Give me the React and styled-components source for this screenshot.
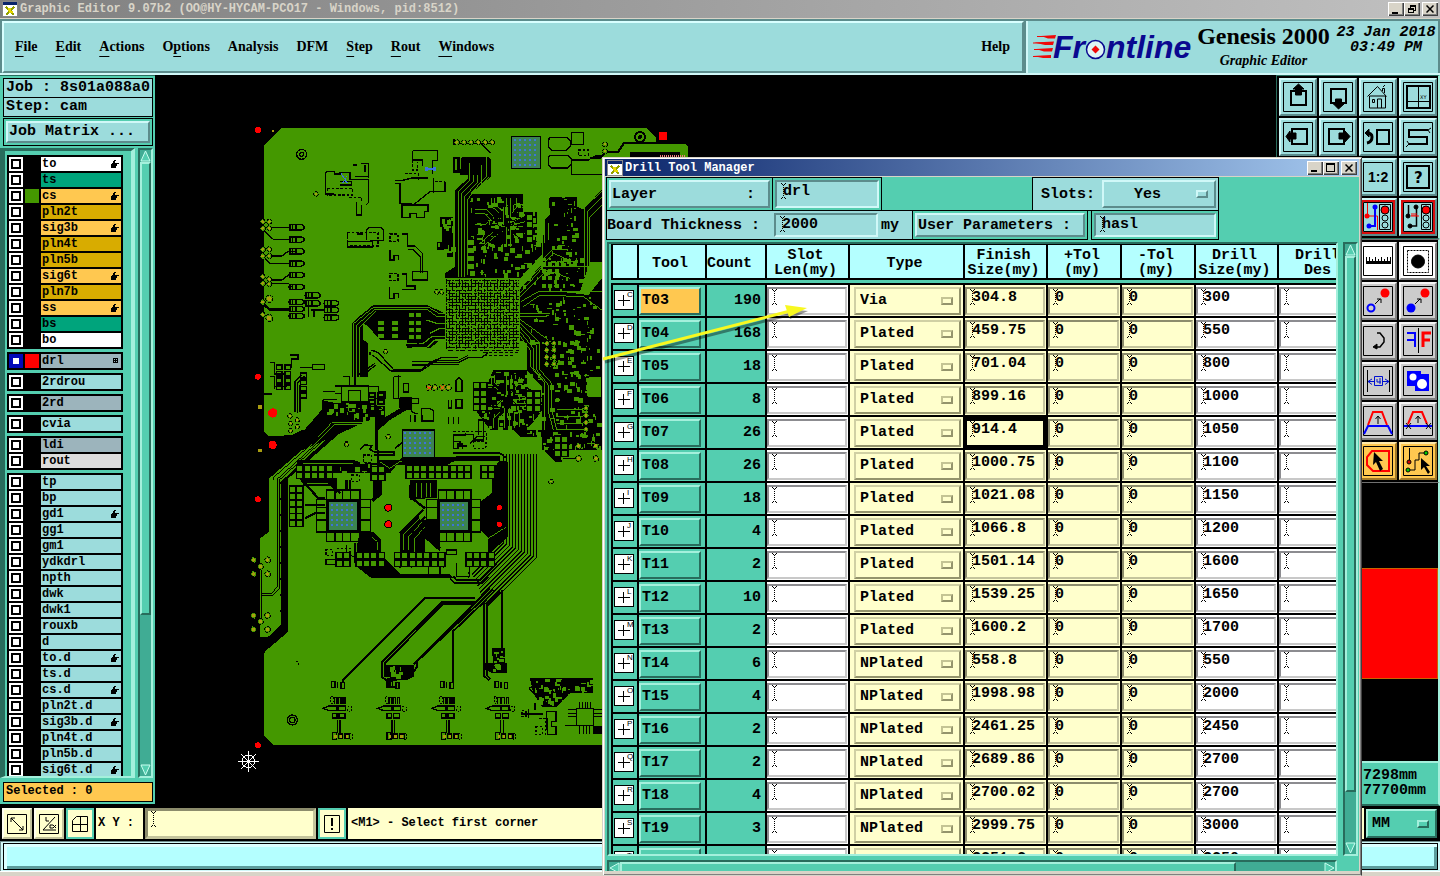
import React from 'react';
import styled, { createGlobalStyle, css } from 'styled-components';

const teal = '#54ceb0';
const tealLight = '#a4f0dc';
const tealDark = '#286c5c';
const aqua = '#9cdcdc';
const aquaLight = '#d0f8f8';
const aquaDark = '#5c8c8c';
const ice = '#b4ffff';
const cream = '#ffffcc';
const gold = '#ffc850';
const mono = '"Liberation Mono", "Courier New", monospace';
const serif = '"Liberation Serif", "Times New Roman", serif';

const bevel = (light, dark, size = 2) => css`
  border: ${size}px solid;
  border-color: ${light} ${dark} ${dark} ${light};
`;

const GlobalStyle = createGlobalStyle`
  * { box-sizing: border-box; }
  body { margin: 0; background: #000; }
  button, input, select {
    font: inherit;
    color: inherit;
    padding: 0;
    margin: 0;
    border: 0;
    border-radius: 0;
    background: none;
    outline: none;
    min-width: 0;
  }
  svg { display: block; flex: none; }
`;

const Screen = styled.div`
  position: relative;
  display: flex;
  flex-direction: column;
  height: 100vh;
  overflow: hidden;
  background: #000;
  font: bold 12px/14px ${mono};
  color: #000;
`;

/* title bars */
const TitleBar = styled.div`
  display: flex;
  align-items: center;
  flex: none;
  height: ${props => (props.$active ? 18 : 19)}px;
  padding: 0 2px;
  gap: 2px;
  color: ${props => (props.$active ? '#fff' : '#d8d4c8')};
  background: ${props => (props.$active
    ? 'linear-gradient(90deg, #0a246a, #a6caf0)'
    : 'linear-gradient(90deg, #808080, #c0c0c0)')};
  border-bottom: 1px solid #d8d4c8;
`;
const TitleText = styled.span`
  flex: 1;
  white-space: nowrap;
`;
const DialogTitle = styled.h1`
  flex: 1;
  margin: 0;
  font: bold 12px/14px ${mono};
  white-space: nowrap;
`;
const WinButtonGroup = styled.div`
  display: flex;
  margin-right: ${props => props.$joined ? 2 : 0}px;
`;
const WinButton = styled.button`
  display: flex;
  align-items: center;
  justify-content: center;
  width: 16px;
  height: 14px;
  background: #d8d4c8;
  box-shadow: inset 1px 1px #fff, inset -1px -1px #404040, inset -2px -2px #808080;
`;

/* menu bar */
const Header = styled.header`
  display: flex;
  flex: none;
  height: 56px;
  gap: 2px;
  padding-right: 2px;
  background: ${aquaDark};
  border-bottom: 2px solid ${aquaLight};
`;
const MenuBar = styled.nav`
  display: flex;
  flex: 1;
  align-items: center;
  gap: 18px;
  margin: 2px 0 0 2px;
  padding: 0 12px 0 11px;
  background: ${aqua};
  ${bevel('#d8ffff', aquaDark)}
  font: bold 14px/18px ${serif};
`;
const MenuItem = styled.button`
  white-space: nowrap;
  margin-left: ${props => (props.$last ? 'auto' : 0)};
  u { text-underline-offset: 5px; text-decoration-thickness: 1px; }
`;
const Brand = styled.div`
  display: flex;
  align-items: flex-start;
  width: 412px;
  margin-top: 2px;
  padding-left: 3px;
  gap: 2px;
  background: ${aqua};
  border-left: 2px solid ${aquaLight};
`;
const Product = styled.div`
  display: flex;
  flex-direction: column;
  align-items: center;
  width: 137px;
  padding-top: 2px;
  white-space: nowrap;
`;
const ProductName = styled.span`
  font: bold 24px/26px ${serif};
`;
const ProductPart = styled.span`
  font: italic bold 14px/24px ${serif};
`;
const Clock = styled.time`
  display: flex;
  flex: 1;
  flex-direction: column;
  align-items: center;
  padding-top: 4px;
  font: italic bold 15px/15px ${mono};
  white-space: nowrap;
`;

/* left column */
const Body = styled.div`
  display: flex;
  flex: 1;
  min-height: 0;
`;
const Sidebar = styled.aside`
  display: flex;
  flex-direction: column;
  flex: none;
  width: 155px;
  padding: 2px 2px 2px 3px;
  background: ${teal};
  border-top: 1px solid ${tealDark};
  border-bottom: 2px solid #000;
`;
const InfoLine = styled.div`
  height: 20px;
  margin-bottom: -1px;
  padding-left: 2px;
  border: 1px solid #000;
  background: ${aqua};
  font-size: 15px;
  line-height: 18px;
  white-space: pre;
`;
const MatrixFrame = styled.div`
  margin-top: 2px;
  padding: 2px;
  border: 1px solid #000;
`;
const MatrixButton = styled.button`
  width: 100%;
  height: 22px;
  padding-left: 1px;
  text-align: left;
  font-size: 15px;
  line-height: 18px;
  background: ${aqua};
  ${bevel(aquaLight, aquaDark)}
`;
const ListArea = styled.div`
  display: flex;
  flex: 1;
  min-height: 0;
  margin: 2px 0 4px -3px;
  gap: 3px;
`;
const ListFrame = styled.div`
  flex: 1;
  overflow: hidden;
  padding: 4px 8px 0 2px;
  border-style: solid;
  border-width: 3px 4px 2px 5px;
  border-color: ${tealDark} ${tealLight} ${tealLight} ${tealDark};
`;
const LayerGroup = styled.div`
  display: flex;
  flex-direction: column;
  gap: 2px;
  margin-bottom: 3px;
  padding: 2px;
  background: #000;
`;
const LayerRow = styled.label`
  display: grid;
  grid-template-columns: 14px 14px 1fr;
  gap: 2px;
  height: 14px;
`;
const LayerCheck = styled.input.attrs({ type: 'checkbox' })`
  && {
    appearance: none;
    width: 14px;
    height: 14px;
    border: 2px solid ${props => (props.$current ? '#0008b8' : '#fff')};
    background: #fff;
    box-shadow: inset 0 0 0 2px ${props => (props.$current ? '#0008b8' : '#000')};
  }
`;
const Swatch = styled.span`
  background: ${props => props.$color || '#000'};
`;
const LayerName = styled.span`
  display: flex;
  align-items: center;
  justify-content: space-between;
  padding: 0 2px 0 1px;
  line-height: 14px;
  background: ${props => props.$color};
`;
const Selected = styled.div`
  height: 20px;
  padding-left: 2px;
  line-height: 17px;
  border: 1px solid #000;
  background: ${gold};
`;

/* scroll bars */
const ScrollBar = styled.div`
  display: flex;
  flex: none;
  flex-direction: ${props => (props.$across ? 'row' : 'column')};
  ${props => (props.$across ? 'height: 15px;' : 'width: 15px;')}
  background: #40ac94;
  ${bevel(tealDark, tealLight)}
`;
const Thumb = styled.div`
  flex: ${props => props.$size};
  background: ${teal};
  ${bevel(tealLight, tealDark)}
`;
const Trough = styled.div`
  flex: ${props => props.$size};
`;

/* drawing */
const Canvas = styled.main`
  flex: 1;
  min-width: 0;
  overflow: hidden;
  background: #000;
`;

/* right tool panel */
const ToolPanel = styled.aside`
  display: flex;
  flex-direction: column;
  flex: none;
  width: 164px;
  background: #000;
`;
const ToolGrid = styled.div`
  display: grid;
  grid-template-columns: repeat(4, 38px);
  gap: 2px;
  padding: 2px 0 2px 2px;
  background: #000;
  border: 1px solid ${props => (props.$gray ? '#707070' : tealDark)};
  border-right: 2px solid ${tealLight};
`;
const ToolButton = styled.button`
  display: flex;
  align-items: center;
  justify-content: center;
  width: 38px;
  height: 38px;
  background: ${props => props.$face || aqua};
  ${props => (props.$dark
    ? bevel(props.$light, props.$dark)
    : bevel(aquaLight, aquaDark))}
  outline: ${props => (props.$ring ? '2px solid #d80c0c' : 'none')};
  outline-offset: -4px;
`;
const Overview = styled.div`
  display: flex;
  flex-direction: column;
  justify-content: center;
  flex: 1;
  border-right: 2px solid ${tealLight};
`;
const OverviewBoard = styled.div`
  height: 111px;
  margin-top: 2px;
  background: #f00;
  border: 1px solid #c86400;
`;
const Position = styled.output`
  display: flex;
  flex-direction: column;
  height: 45px;
  padding: 5px 0 0 85px;
  font-size: 15px;
  line-height: 15px;
  background: ${teal};
  ${bevel(tealLight, tealDark)}
  border-right-color: ${tealLight};
`;

/* command line */
const CommandRow = styled.div`
  display: flex;
  flex: none;
  height: 35px;
  padding: 2px 1px 2px 2px;
  gap: 2px;
  background: #000;
`;
const CommandButton = styled.button`
  display: flex;
  align-items: center;
  justify-content: center;
  width: ${props => (props.$on ? 28 : 30)}px;
  background: ${cream};
  ${bevel('#fffff0', '#c4c49c')}
  outline: ${props => (props.$on ? `2px solid ${teal}` : 'none')};
  outline-offset: -2px;
`;
const CoordLabel = styled.label`
  width: 47px;
  line-height: 31px;
  padding-left: 2px;
  background: ${cream};
  white-space: nowrap;
`;
const CoordField = styled.div`
  display: flex;
  width: 171px;
  padding: 0 3px;
  background: ${cream};
  ${bevel('#8c8c6c', '#c4c49c', 3)}
`;
const Message = styled.div`
  flex: 1;
  padding-left: 3px;
  line-height: 31px;
  background: ${cream};
`;
const UnitSelect = styled.div`
  display: flex;
  align-items: center;
  justify-content: space-between;
  width: 71px;
  margin: 1px 2px 1px 0;
  padding: 0 6px 0 4px;
  font-size: 15px;
  background: ${teal};
  ${bevel(tealLight, tealDark)}
`;
const StatusFrame = styled.footer`
  display: flex;
  flex: none;
  height: 30px;
  padding: 1px 2px;
  background: ${aquaLight};
  border-top: 1px solid #708c8c;
  border-left: 1px solid #708c8c;
`;
const StatusLine = styled.div`
  flex: 1;
  border: 1px solid #000;
  box-shadow: inset 3px 3px #dcffff, inset -3px -3px #5c9c9c;
  background: ${ice};
`;
const DeskEdge = styled.div`
  flex: none;
  height: 5px;
  background: #d8d4c8;
  border-top: 1px solid #fff;
`;

/* drill tool window */
const Dialog = styled.section`
  position: absolute;
  top: 157px;
  left: 602px;
  right: 78px;
  bottom: 0;
  display: flex;
  flex-direction: column;
  padding: 1px 2px 4px;
  background: #d8d4c8;
  border: 1px solid #d8d4c8;
  border-right-color: #404040;
  box-shadow: inset 1px 1px #fff, inset -1px -1px #808080;
  font-size: 15px;
  line-height: 15px;
`;
const DialogBody = styled.div`
  display: flex;
  flex-direction: column;
  flex: 1;
  min-height: 0;
  padding-left: 1px;
  background: ${teal};
`;
const FormRow = styled.div`
  display: flex;
  flex: none;
  height: ${props => props.$height}px;
  margin-bottom: -1px;
`;
const FormBox = styled.div`
  display: flex;
  align-items: center;
  flex: none;
  width: ${props => props.$width}px;
  margin-right: ${props => props.$after || -1}px;
  padding: ${props => (props.$flush ? '2px 2px 2px 0' : '2px')};
  border: 1px solid #000;
  background: ${props => (props.$plain ? aqua : teal)};
`;
const FormButton = styled.button`
  flex: 1;
  display: flex;
  align-items: center;
  justify-content: space-between;
  height: 100%;
  padding: 0 ${props => props.$inset || 13}px 0 1px;
  text-align: left;
  white-space: pre;
  background: ${aqua};
  ${bevel(aquaLight, aquaDark)}
`;
const FormLabel = styled.label`
  flex: none;
  width: ${props => props.$width}px;
  padding-left: ${props => props.$indent || 0}px;
  white-space: pre;
`;
const FormField = styled.div`
  display: flex;
  flex: ${props => (props.$width ? 'none' : 1)};
  width: ${props => (props.$width ? `${props.$width}px` : 'auto')};
  height: 100%;
  padding: 1px 0 0 4px;
  background: ${aqua};
  ${bevel(aquaDark, aquaLight)}
`;
const TextInput = styled.input`
  flex: 1;
  width: 0;
  height: 17px;
  line-height: 17px;
  margin-left: -3px;
`;
const Picker = styled.select`
  appearance: none;
  flex: 1;
  width: 0;
  height: 100%;
  padding-right: ${props => (props.$center ? 6 : 0)}px;
  text-align: ${props => (props.$center ? 'center' : 'left')};
`;
const Knob = styled.span`
  flex: none;
  width: 12px;
  height: 8px;
  ${props => bevel(props.$light || aquaLight, props.$dark || aquaDark)}
`;
const TableArea = styled.div`
  display: flex;
  flex: 1;
  min-height: 0;
  margin: 3px 1px 4px 1px;
  gap: 5px;
`;
const TableFrame = styled.div`
  flex: 1;
  overflow: hidden;
  padding-left: 2px;
  border-style: solid;
  border-width: 2px;
  border-color: ${tealDark} ${tealLight} ${tealLight} ${tealDark};
`;
const DrillTable = styled.table`
  table-layout: fixed;
  width: 749px;
  border-collapse: separate;
  border-spacing: 0;
  tbody::before {
    content: '';
    display: block;
    height: 3px;
  }
`;
const HeadCell = styled.th`
  height: 36px;
  padding: 3px 4px 0 0;
  border-left: 2px solid #000;
  border-top: 1px solid #000;
  border-bottom: 2px solid #000;
  background: ${ice};
  font-weight: bold;
  text-align: ${props => (props.$snug ? 'left' : 'center')};
  white-space: pre-line;
`;
const Cell = styled.td`
  height: 33px;
  padding: ${props => props.$pad || '1px 2px'};
  border-left: 2px solid #000;
  border-top: 2px solid #000;
  background: ${props => (props.$focus ? '#000' : props.$face || teal)};
  text-align: right;
`;
const PlusButton = styled.button`
  display: block;
  width: 20px;
  height: 20px;
  border: 1px solid #000;
  background: #fff;
`;
const ToolName = styled.button`
  display: block;
  width: 62px;
  height: 28px;
  padding-left: 1px;
  text-align: left;
  background: ${props => (props.$on ? gold : teal)};
  ${bevel(tealLight, tealDark)}
`;
const CellField = styled.div`
  display: flex;
  height: 28px;
  padding-left: 3px;
  background: ${props => (props.$cream ? cream : '#fff')};
  ${props => (props.$cream ? bevel('#8c8c6c', '#c4c49c') : bevel('#8c8c90', '#c8c8c8'))}
  ${props => props.$focus && 'border-color: #000;'}
`;
const TypeField = styled.div`
  display: flex;
  align-items: center;
  height: 28px;
  padding: 0 6px 0 4px;
  background: ${cream};
  ${bevel('#d0d0a4', '#94946c')}
`;
const ScrollRow = styled.div`
  display: flex;
  flex: none;
  height: 11px;
  margin: 0 22px 0 1px;
  overflow: hidden;
`;
const WideScroll = styled(ScrollBar)`
  flex: 1;
`;
const Pointer = styled.svg`
  position: absolute;
  top: 296px;
  left: 596px;
  pointer-events: none;
`;

const menus = [
  ['', 'F', 'ile'], ['', 'E', 'dit'], ['', 'A', 'ctions'], ['O', 'p', 'tions'],
  ['Analysis', '', ''], ['DFM', '', ''], ['', 'S', 'tep'], ['', 'R', 'out'], ['', 'W', 'indows'],
];

const dk = '#d8ac00';
const gn = '#00a47c';
const gr = '#9cb4bc';
const layerGroups = [
  [['to', '#fff', 1], ['ts', gn], ['cs', gold, 1], ['pln2t', dk], ['sig3b', gold, 1], ['pln4t', dk],
    ['pln5b', dk], ['sig6t', gold, 1], ['pln7b', dk], ['ss', gold, 1], ['bs', gn], ['bo', '#fff']],
  [['drl', gr, 2]],
  [['2rdrou', aqua]],
  [['2rd', gr]],
  [['cvia', aqua]],
  [['ldi', gr], ['rout', '#dcdcdc']],
  [['tp', aqua], ['bp', aqua], ['gd1', aqua, 1], ['gg1', aqua], ['gm1', aqua], ['ydkdrl', aqua],
    ['npth', aqua], ['dwk', aqua], ['dwk1', aqua], ['rouxb', aqua], ['d', aqua], ['to.d', aqua, 1],
    ['ts.d', aqua], ['cs.d', aqua, 1], ['pln2t.d', aqua], ['sig3b.d', aqua, 1], ['pln4t.d', aqua],
    ['pln5b.d', aqua], ['sig6t.d', aqua, 1]],
];

const columns = [
  ['', 26], ['Tool', 68], ['Count', 60], ['Slot\nLen(my)', 83], ['Type', 115], ['Finish\nSize(my)', 83],
  ['+Tol\n(my)', 74], ['-Tol\n(my)', 74], ['Drill\nSize(my)', 83], ['Drill\nDes', 83],
];

const tools = [
  ['T03', 190, 'Via', '304.8', '300'],
  ['T04', 168, 'Plated', '459.75', '550'],
  ['T05', 18, 'Plated', '701.04', '800'],
  ['T06', 8, 'Plated', '899.16', '1000'],
  ['T07', 26, 'Plated', '914.4', '1050'],
  ['T08', 26, 'Plated', '1000.75', '1100'],
  ['T09', 18, 'Plated', '1021.08', '1150'],
  ['T10', 4, 'Plated', '1066.8', '1200'],
  ['T11', 2, 'Plated', '1501.14', '1600'],
  ['T12', 10, 'Plated', '1539.25', '1650'],
  ['T13', 2, 'Plated', '1600.2', '1700'],
  ['T14', 6, 'NPlated', '558.8', '550'],
  ['T15', 4, 'NPlated', '1998.98', '2000'],
  ['T16', 2, 'NPlated', '2461.25', '2450'],
  ['T17', 2, 'NPlated', '2689.86', '2700'],
  ['T18', 4, 'NPlated', '2700.02', '2700'],
  ['T19', 3, 'NPlated', '2999.75', '3000'],
  ['T20', 2, 'NPlated', '3251.2', '3250'],
];

const AppIcon = () => (
  <svg width="16" height="16" viewBox="0 0 16 16" shapeRendering="crispEdges">
    <path fill="#fff" stroke="#888" d="M.5.5h15v15H.5z" />
    <path fill="#0a246a" d="M1 1h14v3H1z" />
    <path stroke="#94a000" strokeWidth="2" fill="none" d="M4 6l8 8M12 6l-8 8" />
    <path fill="#e8d800" d="M6 7h3v3H6zM7 10h4v2H7z" />
  </svg>
);

const WinButtons = ({ restore }) => (
  <>
    <WinButtonGroup>
      <WinButton aria-label="Minimize">
        <svg width="10" height="9"><path d="M1 7h6v2H1z" /></svg>
      </WinButton>
      <WinButton aria-label="Maximize">
        <svg width="10" height="9" shapeRendering="crispEdges">
          {restore
            ? <path fill="none" stroke="#000" d="M3.5 2.5V.5h5v5h-2M1.5 3.5h5v4h-5zM3 1h6M1 4h6" />
            : <path fill="none" stroke="#000" d="M.5.5h8v8h-8zM0 1.5h9" />}
        </svg>
      </WinButton>
    </WinButtonGroup>
    <WinButton aria-label="Close">
      <svg width="8" height="8"><path stroke="#000" strokeWidth="1.5" d="M.5.5l7 7M7.5.5l-7 7" /></svg>
    </WinButton>
  </>
);

const IBeam = () => (
  <svg width="5" height="16" viewBox="0 0 5 16" shapeRendering="crispEdges">
    <path stroke="#000" strokeDasharray="1 1" d="M2.5 2v12" />
    <path fill="#000" d="M0 0h1v1H0zM4 0h1v1H4zM1 1h1v1H1zM3 1h1v1H3zM0 15h1v1H0zM4 15h1v1H4zM1 14h1v1H1zM3 14h1v1H3z" />
  </svg>
);

const ScrollArrow = ({ d }) => (
  <svg width="11" height="12" viewBox="0 0 11 12">
    <path fill="#54ceb0" stroke="#c8fff0" d={d} />
  </svg>
);

const LayerMark = ({ kind }) => (kind === 1 ? (
  <svg width="8" height="8" viewBox="0 0 8 8" shapeRendering="crispEdges">
    <path d="M3 0h2v1h-1v2h4v1H6v1H6v1H5v2H0V4h1V3h1V1h1z" />
  </svg>
) : (
  <svg width="6" height="6" viewBox="0 0 6 6" shapeRendering="crispEdges">
    <path fill="none" stroke="#000" d="M.5.5h4v4h-4zM2.5 0v5M0 2.5h5" />
  </svg>
));

const Logo = () => (
  <svg width="162" height="52" viewBox="1031 21 162 52">
    <g fill="#f00808">
      <path d="M1041 36l15-1-1 3.5h-7zM1034 42.500l20-1-1 3.500h-8zM1036 49l17-1-1 3.500h-8zM1033 56l18-1v3h-8z" />
      <path stroke="#f00808" d="M1037 36.500h10M1033 43h10M1034 49.500h10M1033 56.500h10" />
    </g>
    <g fill="#0a0890" fontFamily='"Liberation Sans", Arial, sans-serif' fontWeight="bold" fontStyle="italic" fontSize="32">
      <text x="1053" y="58">Fr</text>
      <text x="1106" y="58">ntline</text>
    </g>
    <circle cx="1095.500" cy="49.500" r="9" fill="#dcf4f4" stroke="#0a0890" strokeWidth="1.5" />
    <path fill="#f00808" d="M1095.500 45.500l4 4-4 4-4-4z" />
  </svg>
);

const glyph = { fill: '#000', stroke: 'none', fontFamily: '"DejaVu Sans", sans-serif', fontWeight: 'bold' };

const iconShapes = {
  up: <><path strokeWidth="2" d="M8 9v14h15V9z" /><path fill="#000" d="M12.5 13V7H10l5.5-5L21 7h-2.500v6z" /></>,
  down: <><path strokeWidth="2" d="M8 7h15v14H8z" /><path fill="#000" d="M12.5 17h6v5H21l-5.500 5-5-5h2z" /></>,
  home: <path d="M4.5 14.5l10-10 9 10M6.500 14v12h16V14zM14.500 26v-9h4v9M9.500 17.500h2v3h-2zM19.500 9V6.500h2V11M20 5l2-2" />,
  panes: <><path strokeWidth="2" d="M4 4h23v22H4z" /><path d="M15.500 4v22M4 19.500h23" /><text x="17" y="17" {...glyph} fontWeight="normal" fontSize="5">XY</text></>,
  left: <><path strokeWidth="2" d="M9 7h15v15H9z" /><path fill="#000" d="M13 11H7V9l-4 5.500L7 20v-3h6z" /></>,
  right: <><path strokeWidth="2" d="M6 7h15v15H6z" /><path fill="#000" d="M16 11h6V9l5 5.500-5 5.500v-3h-6z" /></>,
  undo: <><path strokeWidth="2" d="M14 8h12v14H14z" /><path strokeWidth="3" d="M4 21q5-1 5-6q0-4-5-4" /><path fill="#000" d="M2 11l4-4v8z" /></>,
  snake: <><path strokeWidth="2" d="M25 8H6v7h18v7H6" /><path d="M25 8l3-2M25 8l2 3M6 22l-2-3M6 22l-3 3" /></>,
  ratio: <text x="5" y="20" {...glyph} fontFamily='"Liberation Sans", sans-serif' fontSize="14">1:2</text>,
  help: <><path strokeWidth="2" d="M4 4h22v22H4z" /><text x="11" y="21" {...glyph} fontSize="15">?</text></>,
  drcRed: (
    <>
      <path stroke="#f00" d="M4.500 1v13h10v14" /><path stroke="#00f" strokeWidth="2" d="M12 5v19H6" />
      <circle cx="4" cy="14" r="2.500" fill="#f00" stroke="none" />
      <circle cx="12" cy="5" r="2.500" fill="#00f" stroke="none" /><circle cx="6" cy="24" r="2.500" fill="#00f" stroke="none" />
      <path d="M16.500 2.500h11v25h-11z" /><circle cx="22" cy="8" r="4" fill="#f00" />
      <circle cx="22" cy="16" r="3" /><circle cx="22" cy="23" r="3" />
    </>
  ),
  drcBlack: (
    <>
      <path d="M5.500 3v11M13.500 5v19h-6" strokeWidth="1.500" /><path stroke="#f00" d="M8 14h8M9 11v3M11 11v3M13 11v3" />
      <g fill="#000"><circle cx="5" cy="14" r="2" /><circle cx="13" cy="5" r="2" /><circle cx="7" cy="24" r="2" /></g>
      <path d="M18.500 2.500h9v25h-9z" /><circle cx="23" cy="8" r="4" fill="#f00" />
      <circle cx="23" cy="16" r="3" /><circle cx="23" cy="23" r="3" />
    </>
  ),
  ruler: <path fill="#000" stroke="none" d="M3 18v-7h1v4h2v-4h1v4h2v-2h1v2h2v-4h1v4h2v-2h1v2h2v-4h1v4h2v-2h1v2h2v-4h1v4h2v-4h1v7z" />,
  pad: <><path strokeDasharray="2 1" d="M4.500 4.500h21v22h-21z" /><circle cx="15" cy="15.500" r="6.500" fill="#000" /></>,
  moveOpen: (
    <>
      <circle cx="8" cy="22" r="3.500" stroke="#00f" strokeWidth="2" /><circle cx="22" cy="7" r="4.500" fill="#f00" stroke="none" />
      <path d="M12 18l5-5M14 13h4v4" />
    </>
  ),
  moveFull: (
    <>
      <circle cx="8" cy="22" r="4.500" fill="#00f" stroke="none" /><circle cx="22" cy="7" r="4.500" fill="#f00" stroke="none" />
      <path d="M12 18l5-5M14 13h4v4" />
    </>
  ),
  rotate: <><path strokeWidth="1.500" d="M14 7h3l4 5v4l-4 5h-5" /><path fill="#000" d="M10 21l4-3v5z" /></>,
  mirror: <><path d="M15.500 2v25" /><path stroke="#00f" strokeWidth="2" d="M4 7h8v14M4 14h8" /><path stroke="#f00" strokeWidth="3" d="M28 7h-8v14M27 14h-7" /></>,
  stretch: <><path d="M4.500 4v22M26.500 4v22" /><g stroke="#0010d0"><path d="M11.500 10.500h8v9h-8zM14 13v3h4M17 12v6M5 15.500h6M20 15.500h6M9 13l-4 2.500 4 3M22 13l4 2.500-4 3" /></g></>,
  blocks: <><path fill="#00f" stroke="none" d="M4 5h14v3h8v17H12v-5H4z" /><circle cx="10" cy="11" r="3.500" fill="#fff" stroke="none" /><circle cx="19" cy="18" r="5" fill="#fff" stroke="none" /></>,
  raise: <><path stroke="#00f" strokeWidth="2" d="M1 28l4-8h20l4 8" /><path stroke="#f00" strokeWidth="2" d="M5 19l5-13h9l5 13" /><path d="M15 18v-7M12.500 13l2.500-3 2.500 3" /></>,
  raiseCut: <><path stroke="#00f" strokeWidth="2" d="M1 20h28" /><path stroke="#f00" strokeWidth="2" d="M5 18l5-12h9l5 12" /><path d="M15 17v-6M12.500 13l2.500-3 2.500 3M3 17l5 6M8 17l-5 6M23 17l5 6M28 17l-5 6" /></>,
  pick: <><path stroke="#f00" strokeWidth="2" d="M9 5h17v20H10l-6-6v-8z" /><path fill="#000" stroke="none" d="M11 6l9 9h-4l4 8-3 2-4-9-3 3z" /></>,
  pickNet: (
    <>
      <path d="M6.500 2v12M24 7h-8v7h-4v10H6" />
      <circle cx="6" cy="16" r="2" fill="#d00000" /><circle cx="23" cy="7" r="2" fill="#0c0" /><circle cx="5" cy="24" r="2" fill="#0c0" />
      <path fill="#000" stroke="none" d="M18 12l9 8h-4l4 6-2 2-4-7-3 3z" />
    </>
  ),
};

const ToolIcon = ({ name }) => (
  <svg width="30" height="30" viewBox="0 0 30 30" fill="none" stroke="#000">
    <path d="M.5.5h29v29H.5z" />
    {iconShapes[name]}
  </svg>
);

const viewTools = [
  'up', 'down', 'home', 'panes', 'left', 'right', 'undo', 'snake',
  '', '', 'ratio', 'help', '', '', 'drcRed', 'drcBlack',
];
const editTools = [
  '', '', 'ruler', 'pad', '', '', 'moveOpen', 'moveFull', '', '', 'rotate', 'mirror',
  '', '', 'stretch', 'blocks', '', '', 'raise', 'raiseCut', '', '', 'pick', 'pickNet',
];
const editFace = index => (index < 4 ? '#fff' : index > 19 ? gold : '#ccc');

/* board artwork */
const copper = '#449800';

// small rectangles on a coarse grid, same result on every render
const scatter = (x, y, w, h, count, seed) => {
  let state = seed * 7919;
  const next = max => {
    state = (state * 1103515245 + 12345) % 2147483648;
    return Math.floor((state / 2147483648) * max);
  };
  let d = '';
  for (let i = 0; i < count; i += 1) {
    const bw = 3 + next(5) * 3;
    const bh = 3 + next(5) * 3;
    d += `M${x + next(w / 3) * 3} ${y + next(h / 3) * 3}h${bw}v${bh}h${-bw}z`;
  }
  return d;
};

const padGrid = (x, y, nx, ny, px, py, w, h) => {
  let d = '';
  for (let i = 0; i < nx; i += 1) {
    for (let j = 0; j < ny; j += 1) d += `M${x + i * px} ${y + j * py}h${w}v${h}h${-w}z`;
  }
  return d;
};

const PadBank = ({ x, y, n, rows = 2 }) => (
  <>
    <path fill="#000" d={`M${x - 4} ${y - 4}h${n * 22 + 2}v${rows * 22}h${-(n * 22 + 2)}z`} />
    <path fill={copper} d={padGrid(x, y, n, rows, 22, 22, 15, 15)} />
  </>
);

const Thermal = ({ x, y, w, h }) => (
  <>
    <rect x={x} y={y} width={w} height={h} fill="#3c8450" stroke="#000" strokeWidth="3" />
    <path fill="#3c74d8" d={padGrid(x + 6, y + 6, Math.floor(w / 15), Math.floor(h / 15), 15, 15, 6, 6)} />
  </>
);

const Part = ({ x, y }) => (
  <path
    transform={`translate(${x} ${y})`}
    fill="none"
    stroke="#000"
    strokeWidth="4"
    d="M0 -8h18v16H0zM20 -8h14l8 4v8l-8 4H20zM-6 0h6M8 -8v16"
  />
);

const Vias = ({ points, r = 5 }) => points.map(([x, y]) => (
  <g key={`${x}-${y}`}>
    <circle cx={x} cy={y} r={r + 4} fill={copper} stroke="#000" strokeWidth="3" strokeDasharray="9 4" />
    <circle cx={x} cy={y} r={r} fill="#a89c10" />
  </g>
));

const Dots = ({ points }) => points.map(([x, y, r]) => <circle key={`${x}-${y}`} cx={x} cy={y} r={r} fill="#f00" />);

const Connector = ({ x }) => (
  <g transform={`translate(${x} 0)`}>
    <path
      fill="none"
      stroke="#000"
      strokeWidth="4"
      d="M-20 755h10v18h-10zM-2 755v18M8 775v-18h10v18zM-12 822v-20h8v20M0 822v-20h8v20M14 822v-20h6v20M-28 828h24v14h-24l-18-7zM0 828h22v14H0zM-18 850h14v14h-14zM2 850h18v14H2zM-3 870v38M5 870v38M-18 908h12v20h-12zM0 912h12v14H0zM20 912h14v14H20z"
    />
    <path fill="none" stroke="#000" strokeWidth="3" strokeDasharray="5 5" d="M-22 800h8v20h-8zM28 830h12v14H28zM34 910h8v18h-8z" />
    <path fill="#a89c10" d="M-12 916h7v8h-7zM4 916h7v8H4zM22 916h7v8h-7z" />
  </g>
);

const busLines = () => {
  let d = '';
  for (let i = 0; i < 12; i += 1) {
    const x = 890 - i * 9;
    const y = 382 - i * 4;
    d += `M${x} 72V${y}L${740 - i * 4} ${y + x - 740 + i * 4}`;
  }
  return d;
};

const UpperBoard = () => (
  <g transform="translate(240 110) scale(.33333)">
    <g fill="#000">
      <path d="M665 140H745L753 150V200L690 252H850V305H892V400H905V435L840 505H615V490L645 470V240L685 205V195H660z" />
      <path d="M838 540L908 460V400L915 330L930 315V260H1010V290L1030 298L1085 240V1020H905V830L860 780V700L838 690z" />
      <path d="M345 630L400 585H560L620 612V690H600L570 715H500V690H420L385 650L370 640V690L385 700V800H336V640z" />
      <path d="M85 978L180 975L245 900V870L290 880H400L435 900V925H400L190 1020H72V965z" />
      <path d="M700 815H745L760 780H860V830L905 860V905L860 960H750L710 905V880H700z" />
      <path d="M600 320H640V440H620V420H592V395H605V350H600z" />
      <path d="M405 925H430L480 895V860H515V900H500L450 930L415 960V1020H405z" />
    </g>
    <g fill="none" stroke={copper} strokeWidth="3">
      <path d="M655 500V245L690 210V160M664 500V252L700 215V160M673 500V260L712 218V165M682 495V268L725 222V165M740 140V200L693 248M747 200L700 250" />
      <path d="M342 800V640L400 592H565L600 612H620M351 800V645L404 598H560L592 620H620M360 800V650L408 604" />
      <path d="M840 550L910 470L1040 470M840 562L920 480L990 505M842 575L895 545L1085 545M850 590L900 555L1030 560L1085 600M840 612H930M840 620H920M840 628L925 690M842 640L900 700V780L935 820V900L950 960M840 652L890 708V780L925 825V905L940 960M840 665L880 715V775L915 820V1000M840 678L872 722V770L908 812" />
      <path d="M1035 500V290L1085 245M1042 495V305L1085 262M1050 490V320L1085 285M915 400V335M925 390V340M860 500L935 420H985M870 505L940 430L1010 460M950 900H1035M950 920H1035M950 940H1035M950 960H1035" />
      <path d="M620 655H600L570 670M620 640H590L560 630M500 700H550L575 680H620M515 712H560L585 690H620M515 725H565L595 700H620" strokeWidth="4" />
      <path d="M200 1020L275 938H400M208 1020L282 945H370" />
    </g>
    <g fill={copper}>
      <path d={scatter(690, 258, 200, 160, 120, 3)} />
      <path d={scatter(690, 400, 200, 95, 38, 5)} />
      <path d={scatter(850, 440, 180, 100, 45, 7)} />
      <path d={scatter(930, 260, 80, 200, 45, 8)} />
      <path d={scatter(870, 560, 200, 140, 60, 11)} />
      <path d={scatter(930, 690, 145, 160, 70, 13)} />
      <path d={scatter(930, 860, 150, 155, 60, 17)} />
      <path d={scatter(705, 785, 200, 170, 120, 19)} />
      <path d={scatter(595, 325, 45, 115, 24, 21)} />
      <path d={scatter(255, 880, 170, 45, 36, 23)} />
      <path d="M960 545h60l30 -90h35v50l-40 50z" />
      <path d="M1048 800h35v60h-40l-5 -30z" />
      <path d={padGrid(415, 632, 2, 3, 40, 20, 18, 12)} />
      <path d={padGrid(508, 610, 2, 4, 20, 22, 14, 12)} />
      <path d={padGrid(685, 390, 1, 4, 20, 24, 18, 14)} />
      <path d={padGrid(905, 455, 3, 4, 20, 22, 12, 12)} />
    </g>
    <g fill="none" stroke={copper} strokeWidth="3">
      <path d="M755 265v25l25 20v30M765 265v20l25 20v40M800 265v60M812 265v60M830 265v25l-15 20M705 300h35l20 20M705 312h30l20 20M705 345h30l10-10M850 320l-30 15M855 335l-35 10M850 350h-30M720 400l40-35M730 410l45-40M800 350v60M812 350v60M830 400l-10-30" />
      <path d="M755 800v25l20 15M765 795v25l20 15M800 795v50M815 795v40M840 800l-15 40M725 885h50l15-15M725 895h55M830 870h50M830 880h45M830 890h40M760 955v-30l20-20M775 955v-30l15-15M795 955v-60M810 955v-60M825 955v-50M840 950v-40" />
    </g>
    <g fill="none" stroke="#000" strokeWidth="3">
      <path d="M745 320h20v-20M750 345h25l15 15M760 380l35 -25M810 290v50l25 10M815 340l40 -20M820 370l35 25M790 360v50M780 300v35M795 285v50M745 395h40" />
      <path d="M745 830h35l15 20M750 850l40 10M810 800v50l25 -15M800 870v60M815 870l35 30M785 870l-30 30M730 885h40" />
    </g>

    <rect x="615" y="505" width="225" height="215" fill={copper} />
    <g stroke="#000" strokeWidth="3" fill="none">
      {Array.from({ length: 23 }, (_, i) => (
        <path
          key={i}
          strokeDasharray={`${14 + (i * 7) % 19} ${4 + (i * 5) % 7} ${6 + (i * 3) % 8} 3`}
          d={`M${618 + (i % 3) * 5} ${512 + i * 9.5}H838M${620 + i * 9.5} ${507 + (i % 4) * 4}V${718 - (i % 3) * 6}`}
        />
      ))}
      <path strokeDasharray="10 6" d="M730 728H835M730 738H820M735 505v-10M760 505v-10M785 505v-10M810 505v-10" />
    </g>

    <g fill="none" stroke="#000" strokeWidth="4">
      <circle cx="185" cy="133" r="15" /><circle cx="185" cy="133" r="6" />
      <path d="M257 190l5 -6h22v8h16v-4h30v20h55v70l-8 8M257 190v62h26M300 215h35v10h-35M345 200h40M363 160h22v45M350 275v40h14v-30M340 165h10M375 165v20" />
      <path d="M518 122h74v30h-14v40M518 122v28h30v18M465 212h20l30 -8h50M465 220h15v60h35M520 285l50 -40h45v-30M580 205v45M486 285h78v20h-10v18h-24v-12h-20v12h-24z" />
      <path d="M380 390v-30l6 -7h38l6 7v32h-40M322 395h75v16h-75zM322 366v20M352 372h18" />
      <path d="M485 372h18v36h22l22 22v60M503 418h16l22 22v50M450 420v30h12v-14h14v14M518 485h45v25h-45zM448 530v35h14v-14h14v14M485 492h14v36h26v10h-40" />
      <path d="M642 88v15h14M655 100h100M722 100l30 30" />
      <path d="M642 145v40h14v-40zM668 145v50M685 145v50M700 145v50M715 145v50M730 145v50" strokeWidth="7" />
      <path d="M926 90q0 -8 10 -8h45l10 10v18l-14 12h-40l-11 -10zM926 142q0 -6 8 -6h50l10 12v16l-12 10h-48l-8 -8zM995 68h35v35h-35zM995 150h50l20 -12h20M995 150v43h90" />
      <path d="M90 352h55M70 360l30 28h45M95 438h30l20 -14h20M75 445l15 15h55M95 510h30l20 -14M95 520h50l10 10" />
      <path d="M66 575l22 22h58M70 585l20 16h56M205 590v30M212 600h40M222 600v20" />
      <path d="M90 758h14v34h34M90 800h14v36M96 852h-26M104 830h36M150 735h24v12h-20v28M180 772h40M218 764h36v14h-36zM165 905v-90l20 -20M172 910v-90l22 -22M180 905v-80" />
      <path d="M345 800v25M355 795l50 -35M365 800l42 -35M310 800h18v24M305 828h80v48h-80zM325 842h36v34h-36zM285 828h20M285 850h20M250 845h36M250 868h40M248 888h30M385 830h30v15h20v20h-30v30h20" />
      <path d="M395 720l20 8 45 50h85l25 -20h85l30 -15h40l20 -15M398 735l55 48h90l30 -20h85M400 725h10M390 725v10" />
      <path d="M498 705h30l30 -25M515 755h60l30 -12h50M515 765h50l30 -14h60l30 -15" />
      <path d="M460 800v65h18M475 795v70M490 820h16v26h-16zM462 800h20M480 865v30M515 865h20v15h-20v25l10 5h10M545 895h25l10 8v30h-34zM512 915v20M525 915v20" />
      <path d="M648 810v34h18v-34l-9 -8zM626 870v24h8v-24M648 868v26h18v-26zM626 920v22M640 920v22M655 920v22M716 975v-45h14v60h-30v-16h-60v20h20v14h20" />
      <path d="M930 265v30M948 265v40h18v-30h16v30M1000 265v70M988 300v30" strokeWidth="6" />
      <path d="M1060 435l15 -10h10M1062 450h20M900 705h20" />
    </g>
    <g fill="none" stroke="#000" strokeWidth="4" strokeDasharray="8 5">
      <path d="M262 235h75v20h-75zM328 262h36v18M518 150v30h15v-25M495 190h40v20M585 215h28v32M322 368h92v40h-92zM450 372h24v22h-24zM450 490h24v22h-24zM1015 120h30v16h-30zM640 965h100v45" />
    </g>
    <Part x={150} y={352} /><Part x={150} y={389} /><Part x={150} y={424} /><Part x={150} y={461} />
    <Part x={150} y={495} /><Part x={150} y={531} /><Part x={150} y={576} /><Part x={150} y={597} />
    <Part x={150} y={618} /><Part x={198} y={556} /><Part x={198} y={580} /><Part x={254} y={580} />
    <Part x={254} y={600} /><Part x={254} y={623} />
    <path fill="none" stroke="#000" strokeWidth="5" d={padGrid(110, 765, 2, 4, 26, 20, 16, 14) + padGrid(182, 790, 1, 4, 22, 20, 18, 14) + padGrid(388, 850, 2, 3, 26, 20, 18, 12)} />
    <path fill="#3c74d8" d="M305 190l20 30h-5l-18 -28zM325 190l-20 30h5zM556 170h8v4h16v-4h8v14h-8v-4h-16v4h-8z" />
    <Thermal x={815} y={80} w={88} h={95} />
    <Thermal x={487} y={960} w={96} h={100} />
    <PadBank x={702} y={820} n={2} rows={4} />
    <PadBank x={862} y={845} n={2} rows={3} />
    <PadBank x={860} y={315} n={1} rows={4} />
    <Vias
      points={[[68, 335], [88, 335], [68, 355], [88, 355], [68, 418], [88, 418], [68, 438], [88, 438], [68, 500],
        [88, 508], [68, 520], [88, 522], [68, 576], [68, 614], [650, 97], [672, 97], [693, 97], [715, 97],
        [736, 97], [757, 97], [920, 700], [942, 700], [920, 720], [942, 720], [920, 741], [942, 741], [920, 762],
        [942, 762], [1038, 895], [1038, 917], [1038, 938], [1038, 958], [1095, 103], [1095, 124]]}
      r={4}
    />
    <Vias points={[[88, 566], [88, 624]]} r={7} />
    <Vias points={[[228, 252], [437, 724], [445, 979], [320, 1002], [150, 918], [172, 930], [152, 940], [172, 950], [152, 962], [172, 990], [1016, 1008], [1068, 1008], [590, 546], [605, 546]]} r={3} />
    <Vias points={[[567, 833], [585, 833], [608, 833], [625, 833]]} r={5} />
    <path stroke="#f04010" strokeWidth="3" d="M560 826l14 14M574 826l-14 14M600 826l14 14M614 826l-14 14" />
    <path fill="#a89c10" d="M54 885h12v12H54zM54 1015h12v10H54zM96 60h5v5h-5z" />
    <Dots points={[[54, 60, 9], [54, 800, 9], [98, 909, 14], [98, 1005, 14]]} />
    <path fill="#f00" d="M1256 66h24v24h-24z" />
  </g>
);

const LowerBoard = () => (
  <g transform="translate(240 430) scale(.33333)">
    <g fill="#000">
      <path d="M0 20H145L185 0H255L88 145V305L60 325V620H85L123 585V155L290 0H310L145 145V605L80 660L72 670H0z" />
      <path d="M170 90H340L365 98H410V60H418V90H480L490 80H780V92H645L620 105H470L450 130H425V195L400 215V130H175z" />
      <path d="M175 145H290V190L265 160H200z" />
      <path d="M360 305H400L422 328V370L480 432H630L640 445H395L350 410V350z" />
      <path d="M510 150H590V205H560L510 210zM540 270H600V365L555 325V370H480V310L535 255z" />
      <path d="M780 92L805 95V320L755 365V380H745V325L722 300V215L755 190V120z" />
      <path d="M820 0H990V45H960L965 95H945L905 55V20H840z" />
      <path d="M870 745H1060V790H990L950 830H905L880 790z" />
      <path d="M755 655H795V700H800V730H760L735 720V700H760zM432 705H522V740L500 750H470V775H440V740H432z" />
      <path d="M1060 888h25v24h-25z" />
    </g>
    <g fill={copper}>
      <path d={scatter(835, 0, 130, 60, 26, 31)} />
      <path d={scatter(880, 748, 110, 70, 42, 33)} />
      <path d={scatter(1000, 748, 55, 60, 12, 35)} />
      <path d={scatter(436, 708, 80, 60, 18, 37)} />
      <path d={scatter(758, 660, 38, 80, 16, 39)} />
      <path d={scatter(300, 92, 130, 40, 12, 41)} />
    </g>
    <g fill="none" stroke={copper} strokeWidth="3">
      <path d="M365 0V90M530 160V200M545 160V205M560 160V200M572 160V200M490 360V315L540 265M505 360V320L548 275M525 365V325L555 290M190 100H340M560 365V340M575 360V350" />
      <path d="M420 95L450 115L480 95H640M395 320L412 335V360M745 325L800 290" />
    </g>
    <g fill="none" stroke="#000" strokeWidth="3">
      <path d="M262 0L100 143V150M275 0L112 147V470L95 490H64V570M283 0L118 150V475L98 496H64V420" />
      <path strokeWidth="4" d={busLines()} />
      <path strokeWidth="5" d="M640 70H780L800 85M485 95H640L650 80H780" />
      <path strokeWidth="5" d="M630 445L645 460H725L745 440M640 438L650 450H720L770 400" />
      <path strokeWidth="6" d="M785 480V655M780 485L740 525V735L752 748M733 520V738L748 752M705 503H557L310 750V760M712 515H607L425 698V740L440 752M700 521L610 521L434 700V735M760 478L530 695V712L518 728M740 508L638 605V755M750 475L522 703" />
      <path strokeWidth="7" d="M195 160l40 45h20M195 225h60M195 265l30 -15h30M185 150l10 15h80l25 25M330 150v30M320 150v30M420 160v30l-25 20M510 165v35l45 35M480 310l70 -70M520 365v-70l35 -35M545 295l55 60" />
      <path strokeWidth="4" d="M260 180h100v155H260zM230 208h162v98H230zM595 180h98v155H595zM560 208h162v98H560zM285 180v155M308 180v155M332 180v155M230 232h162M230 270h162M620 180v155M645 180v155M670 180v155M560 232h162M560 270h162" />
      <path strokeWidth="5" d="M360 58l15 -14 20 4 -6 10 14 8h60v10h-60M465 55l25 -20" />
      <path strokeWidth="4" d="M640 15h36v-5M640 20v36h14v-14h14v14M690 40l20 -20h25M970 85h40" />
      <path d="M1010 835h50v52h-50zM985 840h25M985 850h25M985 860h25M975 886h35M1060 840h25M1060 850h25M1060 860h25M1020 815v20M1028 815v20M1036 815v20M1044 815v20M1052 815v20M1020 887v25M1030 887v25M1040 887v25M1050 887v25" />
      <path strokeWidth="4" d="M866 838v26M850 852h60M885 820v20M920 845h28v30h-14v14h14v24h-26zM868 775l14 -10v26z" />
      <path strokeWidth="4" d="M258 388h60v16h-60zM320 345v25l30 15M345 340v60M620 360h30v14h-30zM650 400v40h38v-30M610 385v30M600 410v22M565 410v22M480 405v8M515 405v8" />
      <path strokeWidth="4" strokeDasharray="7 5" d="M258 358h20v18h-20zM290 355h40v18M335 135h24v20h-24zM370 75h24v22h-24zM700 35h36v20h-36zM846 842h12v18h-12zM898 866h18v50M888 890h20v24h-20zM685 425v18M168 695h8v10" />
      <circle cx="157" cy="870" r="15" strokeWidth="4" /><circle cx="157" cy="870" r="8" strokeWidth="4" />
    </g>
    <path fill="#000" d={padGrid(120, 155, 1, 10, 1, 48, 6, 6)} />
    <PadBank x={172} y={108} n={5} /><PadBank x={500} y={108} n={9} /><PadBank x={725} y={108} n={2} />
    <PadBank x={345} y={110} n={1} rows={1} /><PadBank x={395} y={112} n={2} rows={2} />
    <PadBank x={150} y={170} n={2} rows={2} /><PadBank x={150} y={212} n={2} rows={2} /><PadBank x={150} y={252} n={2} rows={2} />
    <PadBank x={465} y={370} n={7} /><PadBank x={290} y={370} n={2} /><PadBank x={350} y={370} n={4} /><PadBank x={680} y={370} n={4} />
    <PadBank x={945} y={20} n={2} rows={3} />
    <path fill="#000" d="M259 206h102v102H259zM590 206h102v102H590z" />
    <Thermal x={267} y={215} w={87} h={87} />
    <Thermal x={599} y={215} w={87} h={87} />
    <Thermal x={487} y={0} w={96} h={84} />
    <Connector x={295} /><Connector x={459} /><Connector x={622} /><Connector x={785} />
    <Vias points={[[41, 390], [83, 390], [41, 432], [83, 432], [41, 557], [83, 557], [41, 598], [83, 598], [62, 410], [62, 575], [1016, 48], [1068, 48], [1016, 86], [1068, 86]]} r={5} />
    <Vias points={[[933, 155], [445, 20], [320, 43]]} r={3} />
    <g fill="#000"><circle cx="445" cy="233" r="12" /><circle cx="445" cy="283" r="12" /></g>
    <path fill="#a89c10" d="M54 56h12v11H54z" />
    <Dots points={[[98, 45, 12], [54, 208, 9], [445, 233, 9], [445, 283, 9], [778, 233, 8], [778, 283, 8], [54, 946, 9]]} />
    <g stroke="#fff" strokeWidth="3" fill="none">
      <path d="M25 963v62M-6 994h62M3 972l44 44M47 972L3 1016" /><circle cx="25" cy="994" r="19" />
    </g>
  </g>
);

const Board = () => (
  <svg width="1122" height="731" viewBox="155 75 1122 731" shapeRendering="crispEdges">
    <path fill={copper} d="M264 145L282 128H646L656 138V144H685L688 147V745H273L264 736V653L260 640V536L269 530V480L264 430z" />
    <path fill="none" stroke="#000" strokeWidth="2" d="M590 158h10l6-6h12l6-9h32" />
    <path d="M630 152h50v6h-50z" />
    <path fill="none" stroke="#f08080" strokeDasharray="1 1" strokeWidth="3" d="M660 156h26" />
    <circle cx="640" cy="137" r="5" fill="none" stroke="#000" strokeWidth="2" />
    <circle cx="640" cy="137" r="2" />
    <UpperBoard />
    <LowerBoard />
  </svg>
);

const Layers = () => layerGroups.map(group => (
  <LayerGroup key={group[0][0]}>
    {group.map(([name, color, mark]) => (
      <LayerRow key={name}>
        <LayerCheck $current={name === 'drl'} />
        <Swatch $color={{ cs: copper, drl: '#f00' }[name]} />
        <LayerName $color={color}>{name}{mark && <LayerMark kind={mark} />}</LayerName>
      </LayerRow>
    ))}
  </LayerGroup>
));

const ValueCell = ({ label, value, isCream, focus }) => (
  <Cell $face={isCream ? cream : '#fff'} $pad="1px 1px 1px 0" $focus={focus}>
    <CellField $cream={isCream} $focus={focus}>
      <IBeam />
      <TextInput aria-label={label} defaultValue={value} />
    </CellField>
  </Cell>
);

const ToolRow = ({ tool, index }) => {
  const [name, count, type, finish, drill] = tool;
  return (
    <tr>
      <Cell $pad="0 1px 1px">
        <PlusButton aria-label={`Expand ${name}`}>
          <svg width="18" height="18" viewBox="0 0 18 18" shapeRendering="crispEdges">
            <path stroke="#000" d="M3 9.5h12M8.5 4v11" />
            <text x="12" y="6" fontSize="8" fontWeight="normal" fontFamily="Liberation Sans, sans-serif">{String.fromCharCode(67 + index)}</text>
          </svg>
        </PlusButton>
      </Cell>
      <Cell $pad="1px 0"><ToolName $on={index === 0}>{name}</ToolName></Cell>
      <Cell $pad="0 4px 0 0">{count}</Cell>
      <ValueCell label={`${name} slot length`} value="" />
      <Cell $face={cream} $pad="1px 2px 1px 4px">
        <TypeField>
          <Picker aria-label={`${name} type`} defaultValue={type}>
            <option>Via</option><option>Plated</option><option>NPlated</option>
          </Picker>
          <Knob $light="#c4c494" $dark="#94946c" />
        </TypeField>
      </Cell>
      <ValueCell label={`${name} finish size`} value={finish} isCream focus={name === 'T07'} />
      <ValueCell label={`${name} plus tolerance`} value="0" isCream />
      <ValueCell label={`${name} minus tolerance`} value="0" isCream />
      <ValueCell label={`${name} drill size`} value={drill} />
      <ValueCell label={`${name} designator`} value="" />
    </tr>
  );
};

const DrillToolManager = () => (
  <Dialog aria-label="Drill Tool Manager">
    <TitleBar $active>
      <AppIcon />
      <DialogTitle>Drill Tool Manager</DialogTitle>
      <WinButtons />
    </TitleBar>
    <DialogBody>
      <FormRow $height={34}>
        <FormBox $width={167}>
          <FormButton><span>Layer</span><span>:</span></FormButton>
        </FormBox>
        <FormBox $width={110} $after={150}>
          <FormField><IBeam /><TextInput aria-label="Layer" defaultValue="drl" /></FormField>
        </FormBox>
        <FormBox $width={187} $plain>
          <FormLabel $width={67} $indent={6} htmlFor="slots">Slots:</FormLabel>
          <FormButton as="div" $inset={6}>
            <Picker id="slots" $center defaultValue="Yes"><option>Yes</option><option>No</option></Picker>
            <Knob />
          </FormButton>
        </FormBox>
      </FormRow>
      <FormRow $height={30}>
        <FormBox $width={307} $plain $flush>
          <FormLabel $width={167} htmlFor="thickness">Board Thickness :</FormLabel>
          <FormField $width={104}><IBeam /><TextInput id="thickness" defaultValue="2000" /></FormField>
          <FormLabel as="span" $width={24} $indent={3}>my</FormLabel>
        </FormBox>
        <FormBox $width={176} $after={3}>
          <FormButton>User Parameters :</FormButton>
        </FormBox>
        <FormBox $width={128}>
          <FormField><IBeam /><TextInput aria-label="User parameters" defaultValue="hasl" /></FormField>
        </FormBox>
      </FormRow>
      <TableArea>
        <TableFrame>
          <DrillTable>
            <colgroup>{columns.map(([name, width]) => <col key={name} width={width} />)}</colgroup>
            <thead>
              <tr>{columns.map(([name]) => <HeadCell key={name} $snug={name === 'Count'}>{name}</HeadCell>)}</tr>
            </thead>
            <tbody>
              {tools.map((tool, index) => <ToolRow key={tool[0]} tool={tool} index={index} />)}
            </tbody>
          </DrillTable>
        </TableFrame>
        <ScrollBar>
          <ScrollArrow d="M5.5 1L10 11H1z" />
          <Thumb $size={536} />
          <Trough $size={50} />
          <ScrollArrow d="M5.5 11L10 1H1z" />
        </ScrollBar>
      </TableArea>
      <ScrollRow>
        <WideScroll $across>
          <ScrollArrow d="M1 6L10 1v10z" />
          <Thumb $size={615} />
          <Trough $size={88} />
          <ScrollArrow d="M10 6L1 1v10z" />
        </WideScroll>
      </ScrollRow>
    </DialogBody>
  </Dialog>
);

const App = () => (
  <>
    <GlobalStyle />
    <Screen>
      <TitleBar>
        <AppIcon />
        <TitleText>Graphic Editor 9.07b2 (OO@HY-HYCAM-PCO17 - Windows, pid:8512)</TitleText>
        <WinButtons restore />
      </TitleBar>
      <Header>
        <MenuBar>
          {menus.map(([before, key, after]) => (
            <MenuItem key={before + key + after}>{before}{key && <u>{key}</u>}{after}</MenuItem>
          ))}
          <MenuItem $last>Help</MenuItem>
        </MenuBar>
        <Brand>
          <Logo />
          <Product>
            <ProductName>Genesis 2000</ProductName>
            <ProductPart>Graphic Editor</ProductPart>
          </Product>
          <Clock><span>23 Jan 2018</span><span>03:49 PM</span></Clock>
        </Brand>
      </Header>
      <Body>
        <Sidebar>
          <InfoLine>Job : 8s01a088a0</InfoLine>
          <InfoLine>Step: cam</InfoLine>
          <MatrixFrame><MatrixButton>Job Matrix ...</MatrixButton></MatrixFrame>
          <ListArea>
            <ListFrame><Layers /></ListFrame>
            <ScrollBar>
              <ScrollArrow d="M5.5 1L10 11H1z" />
              <Thumb $size={454} />
              <Trough $size={150} />
              <ScrollArrow d="M5.5 11L10 1H1z" />
            </ScrollBar>
          </ListArea>
          <Selected>Selected : 0</Selected>
        </Sidebar>
        <Canvas><Board /></Canvas>
        <ToolPanel>
          <ToolGrid>
            {viewTools.map((name, i) => (
              <ToolButton key={i} aria-label={name || 'view tool'} $ring={i > 11}>
                <ToolIcon name={name} />
              </ToolButton>
            ))}
          </ToolGrid>
          <ToolGrid $gray>
            {editTools.map((name, i) => (
              <ToolButton
                key={i}
                aria-label={name || 'edit tool'}
                $face={editFace(i)}
                $light={i > 19 ? '#ffe8a8' : '#f4f4f4'}
                $dark={i > 19 ? '#a07828' : '#808080'}
              >
                <ToolIcon name={name} />
              </ToolButton>
            ))}
          </ToolGrid>
          <Overview><OverviewBoard /></Overview>
          <Position><span>7298mm</span><span>77700mm</span></Position>
        </ToolPanel>
      </Body>
      <CommandRow>
        <CommandButton aria-label="Absolute">
          <svg width="20" height="20" fill="none" stroke="#000"><path d="M.5.5h19v19H.5zM4 4l12 12M4 8V4h4M16 12v4h-4" /></svg>
        </CommandButton>
        <CommandButton aria-label="Polar">
          <svg width="20" height="20" fill="none" stroke="#000"><path d="M.5.5h19v19H.5zM16 3L4 16h13M7 3v4h3M17 11l-3 3h-3v-3h3l3 3" /></svg>
        </CommandButton>
        <CommandButton aria-label="Grid" $on>
          <svg width="16" height="16" fill="none" stroke="#000"><path d="M.5 4.5l4-4h11v15H.5zM8.5 0v16M0 8.5h16" /></svg>
        </CommandButton>
        <CoordLabel htmlFor="coords">X Y :</CoordLabel>
        <CoordField><IBeam /><TextInput id="coords" /></CoordField>
        <CommandButton aria-label="Attention" $on>
          <svg width="16" height="18" fill="none" stroke="#000"><path d="M.5.5h15v17H.5z" /><path strokeWidth="2" d="M8 3v8M8 13v2" /></svg>
        </CommandButton>
        <Message>{'<M1> - Select first corner'}</Message>
        <UnitSelect>
          <Picker aria-label="Units" defaultValue="MM"><option>MM</option><option>INCH</option></Picker>
          <Knob $light={tealLight} $dark={tealDark} />
        </UnitSelect>
      </CommandRow>
      <StatusFrame><StatusLine /></StatusFrame>
      <DeskEdge />
      <DrillToolManager />
      <Pointer width="220" height="72" viewBox="596 296 220 72">
        <g opacity=".4" transform="translate(2 3)"><path stroke="#000" strokeWidth="3" d="M603 359L790 311" /><path d="M806 308L785 306l3 10z" /></g>
        <path stroke="#f8f820" strokeWidth="3" d="M603 359L790 311" />
        <path fill="#f8f820" d="M807 308L785 305l4 12z" />
      </Pointer>
    </Screen>
  </>
);

export default App;
